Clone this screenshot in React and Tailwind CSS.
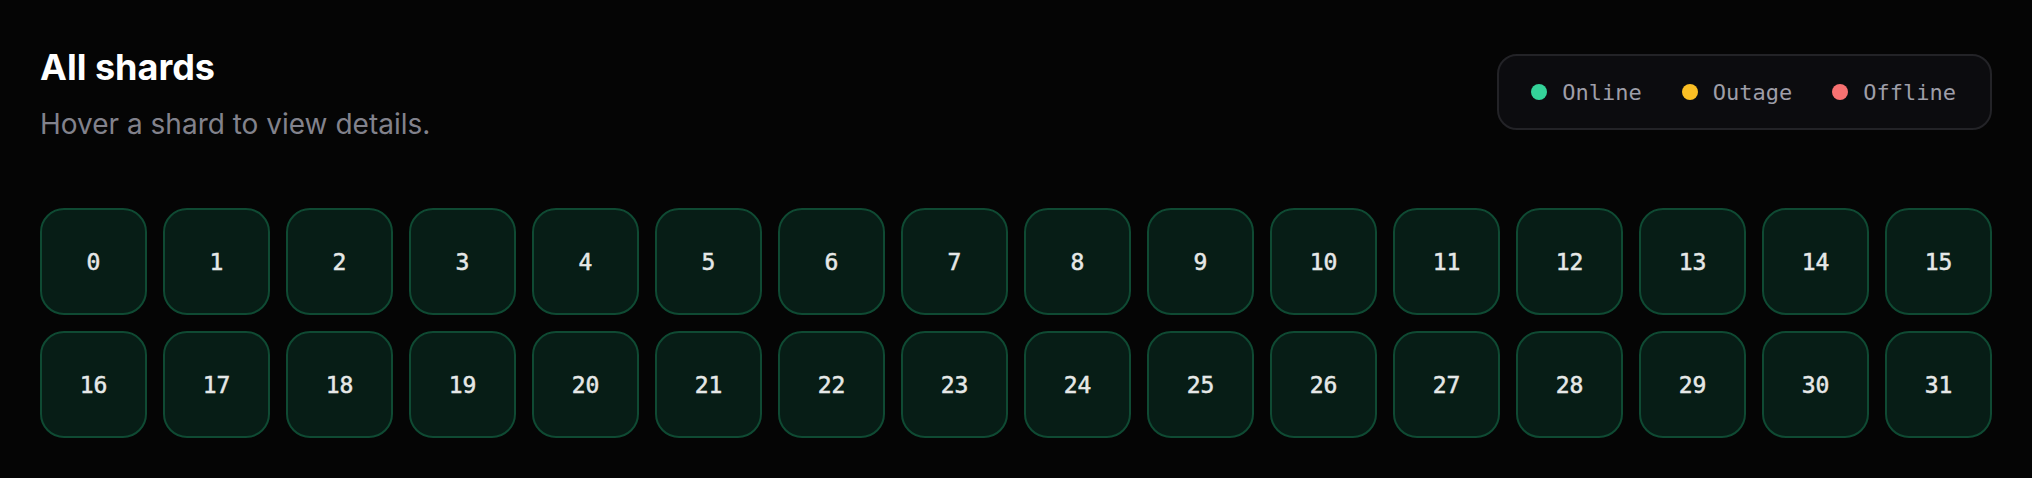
import React from 'react';

// Legend entries for the shard status key
const STATUSES = [
  { label: 'Online', dot: 'bg-[#34d399]' },
  { label: 'Outage', dot: 'bg-[#fbbf24]' },
  { label: 'Offline', dot: 'bg-[#f87171]' },
];

const SHARD_COUNT = 32;

const mono = { fontFamily: '"DejaVu Sans Mono", "Liberation Mono", monospace' };

function Legend() {
  return (
    <div className="mt-[7px] flex h-[76px] items-center gap-10 rounded-[20px] border-2 border-[#232327] bg-[#0c0c0f] pl-8 pr-[34px]">
      {STATUSES.map((s) => (
        <div key={s.label} className="flex items-center gap-[15px]">
          <span className={`h-4 w-4 rounded-full ${s.dot}`} />
          <span className="pt-[2px] text-[22px] leading-none text-[#9e9ea8]" style={mono}>
            {s.label}
          </span>
        </div>
      ))}
    </div>
  );
}

function ShardTile({ id }) {
  return (
    <div className="flex aspect-square items-center justify-center rounded-[24px] border-2 border-[#0f4a33] bg-[#071d16]">
      <span
        className="pt-[2px] text-[23px] leading-none text-[#e6e8e7] [-webkit-text-stroke:0.5px_#e6e8e7]"
        style={mono}
      >
        {id}
      </span>
    </div>
  );
}

export default function App() {
  const shards = Array.from({ length: SHARD_COUNT }, (_, i) => i);

  return (
    <div
      className="min-h-screen bg-[#050505] px-10 pt-[47px] pb-10"
      style={{ fontFamily: 'Inter, "Liberation Sans", sans-serif' }}
    >
      <div className="flex items-start justify-between">
        <div>
          <h1 className="text-[36px] font-bold leading-10 text-white">All shards</h1>
          <p className="mt-[21px] text-[28px] leading-8 text-[#82828c]">
            Hover a shard to view details.
          </p>
        </div>
        <Legend />
      </div>

      <div className="mt-[68px] grid grid-cols-16 gap-4">
        {shards.map((id) => (
          <ShardTile key={id} id={id} />
        ))}
      </div>
    </div>
  );
}
